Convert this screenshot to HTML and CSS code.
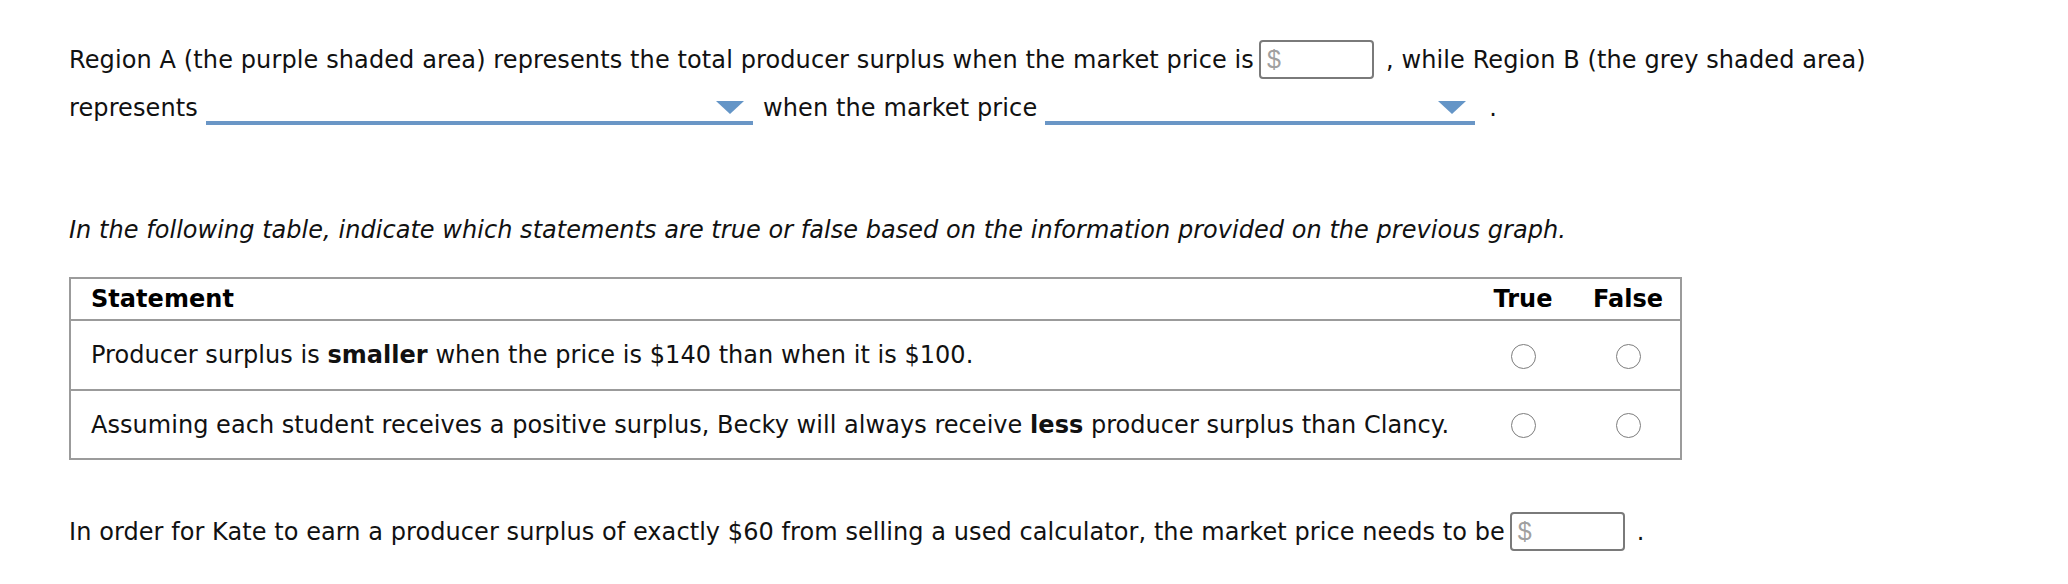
FILE: index.html
```html
<!DOCTYPE html>
<html lang="en">
<head>
<meta charset="utf-8">
<title>Producer surplus</title>
<link rel="stylesheet" href="styles.css">
</head>
<body>
<main class="page">
  <p class="para first">Region A (the purple shaded area) represents the total producer surplus when the market price is<span class="money-input money-input--gap"><span class="dollar">$</span></span>, while Region B (the grey shaded area) represents<span class="dropdown dropdown--wide"><svg class="caret" width="28" height="13" viewBox="0 0 28 13"><polygon points="0,0 28,0 14,13" fill="#6495c7"/></svg></span>when the market price<span class="dropdown dropdown--narrow"><svg class="caret" width="28" height="13" viewBox="0 0 28 13"><polygon points="0,0 28,0 14,13" fill="#6495c7"/></svg></span><span class="period">.</span></p>

  <p class="para instructions">In the following table, indicate which statements are true or false based on the information provided on the previous graph.</p>

  <table class="tf-table">
    <thead>
      <tr class="head-row">
        <th class="stmt">Statement</th>
        <th class="choice choice--true">True</th>
        <th class="choice choice--false">False</th>
      </tr>
    </thead>
    <tbody>
      <tr class="body-row">
        <td class="stmt">Producer surplus is <strong>smaller</strong> when the price is $140 than when it is $100.</td>
        <td class="choice choice--true"><span class="radio"></span></td>
        <td class="choice choice--false"><span class="radio"></span></td>
      </tr>
      <tr class="body-row body-row--second">
        <td class="stmt">Assuming each student receives a positive surplus, Becky will always receive <strong>less</strong> producer surplus than Clancy.</td>
        <td class="choice choice--true"><span class="radio"></span></td>
        <td class="choice choice--false"><span class="radio"></span></td>
      </tr>
    </tbody>
  </table>

  <p class="para last">In order for Kate to earn a producer surplus of exactly $60 from selling a used calculator, the market price needs to be<span class="money-input money-input--gap"><span class="dollar">$</span></span><span class="period">.</span></p>
</main>
</body>
</html>
```

FILE: styles.css
```css
html, body {
  margin: 0;
  padding: 0;
  background: #ffffff;
}

body {
  font-family: "DejaVu Sans", Verdana, sans-serif;
  font-size: 24px;
  color: #111111;
}

.page {
  padding: 36px 0 0 69px;
  width: 1900px;
}

.para {
  margin: 0;
  line-height: 48px;
}

.first {
  width: 1840px;
  letter-spacing: 0.11px;
}

.instructions {
  margin-top: 74px;
  font-style: italic;
  letter-spacing: 0.04px;
}

.last {
  margin-top: 48px;
  letter-spacing: 0.07px;
}

.money-input {
  display: inline-block;
  box-sizing: border-box;
  width: 115px;
  height: 39px;
  border: 2px solid #7a7a7a;
  border-radius: 4px;
  line-height: 35px;
  padding: 0 6px;
  vertical-align: baseline;
  letter-spacing: 0;
}

.money-input--gap {
  margin: 0 12px 0 5px;
}

.dollar {
  font-family: "Liberation Sans", Arial, sans-serif;
  font-size: 25px;
  color: #a0a0a0;
}

.dropdown {
  display: inline-block;
  box-sizing: border-box;
  height: 28px;
  border-bottom: 4px solid #6a96c6;
  vertical-align: -9px;
  margin: 0 10px 0 8px;
}

.dropdown--wide {
  width: 547px;
}

.dropdown--narrow {
  width: 430px;
  margin-right: 14px;
}

.caret {
  display: block;
  margin: 4px 9px 0 auto;
}

.tf-table {
  margin-top: 23px;
  width: 1613px;
  border-collapse: collapse;
  border: 2px solid #9b9b9b;
  font-size: 24px;
  letter-spacing: 0.04px;
}

.tf-table th,
.tf-table td {
  padding: 0;
}

.head-row {
  height: 42px;
}

.head-row th {
  font-weight: bold;
  vertical-align: middle;
  color: #000;
}

.body-row {
  height: 70px;
  border-top: 2px solid #9b9b9b;
}

.body-row--second {
  height: 69px;
}

.body-row td {
  vertical-align: middle;
}

.tf-table .stmt {
  text-align: left;
  padding-left: 20px;
}

.choice {
  text-align: center;
}

.choice--true {
  width: 106px;
}

.choice--false {
  width: 104px;
}

.radio {
  display: inline-block;
  box-sizing: border-box;
  width: 25px;
  height: 25px;
  border: 1.5px solid #7d7d7d;
  border-radius: 50%;
  vertical-align: middle;
}
```
